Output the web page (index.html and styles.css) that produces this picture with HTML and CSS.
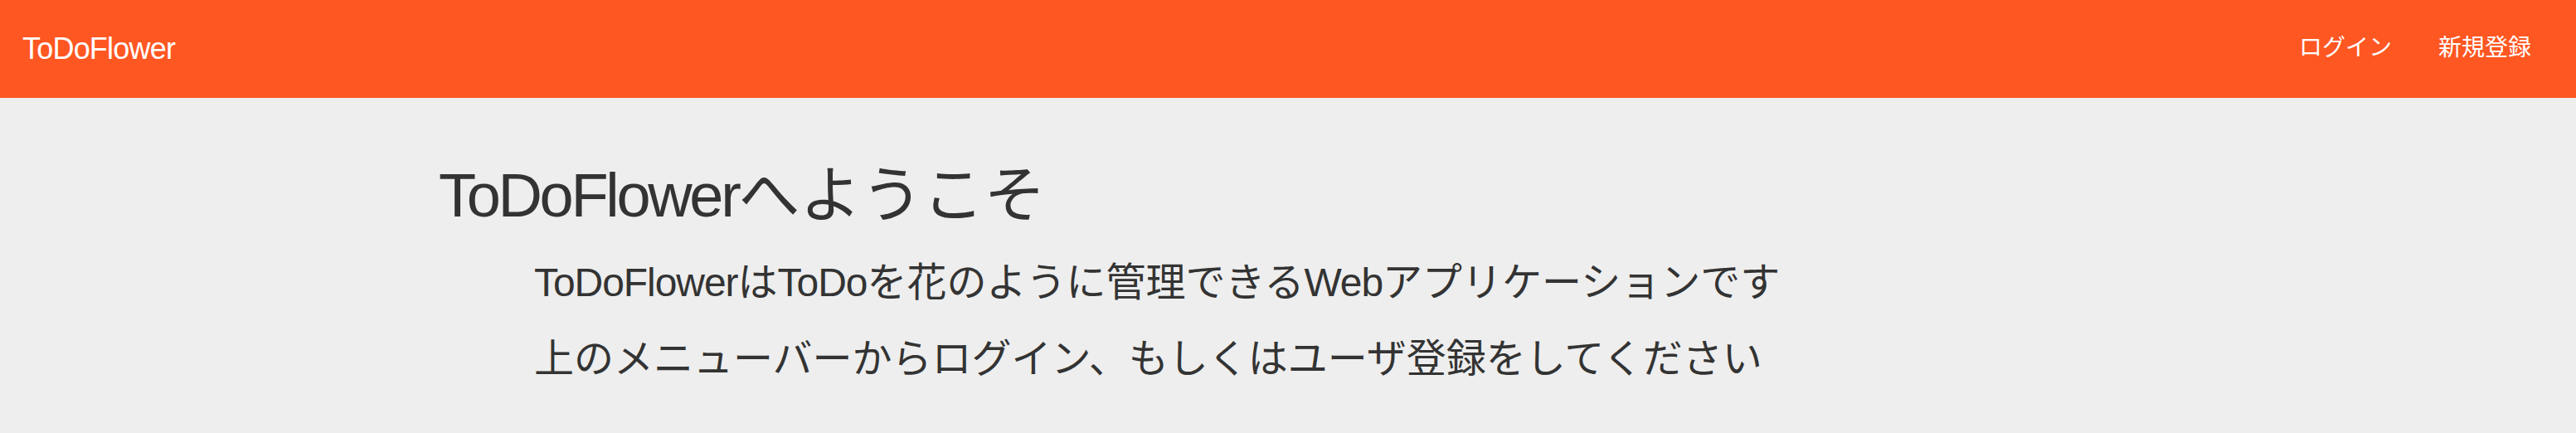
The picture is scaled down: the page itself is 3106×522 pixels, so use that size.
FILE: index.html
```html
<!DOCTYPE html>
<html lang="ja">
<head>
<meta charset="utf-8">
<title>ToDoFlower</title>
<link rel="stylesheet" href="styles.css">
</head>
<body>
<nav class="navbar">
  <a class="brand" href="#"><span class="latin">ToDoFlower</span></a>
  <ul class="nav-links">
    <li><a href="#">ログイン</a></li>
    <li><a href="#">新規登録</a></li>
  </ul>
</nav>
<main class="content">
  <h1 class="title"><span class="latin">ToDoFlower</span>へようこそ</h1>
  <div class="intro">
    <p><span class="latin">ToDoFlower</span>は<span class="latin">ToDo</span>を花のように管理できる<span class="latin">Web</span>アプリケーションです</p>
    <p>上のメニューバーからログイン、もしくはユーザ登録をしてください</p>
  </div>
</main>
</body>
</html>
```
FILE: styles.css
```css
html, body {
  margin: 0;
  padding: 0;
}
body {
  background: #eeeeee;
  font-family: "Liberation Sans", "Noto Sans CJK JP", sans-serif;
  color: #333333;
}
.latin {
  letter-spacing: -0.022em;
}
.navbar {
  height: 118px;
  background: #ff5722;
  display: flex;
  align-items: center;
  justify-content: space-between;
  padding: 0 26px 0 27px;
}
.brand {
  color: #ffffff;
  text-decoration: none;
  font-size: 36px;
  line-height: 36px;
}
.nav-links {
  list-style: none;
  margin: 0;
  padding: 0;
  display: flex;
}
.nav-links a {
  display: block;
  color: #ffffff;
  text-decoration: none;
  font-size: 28px;
  line-height: 28px;
  padding: 0 28px 3px;
}
.content {
  padding-left: 529px;
}
.title {
  margin: 68px 0 0;
  font-weight: normal;
  font-size: 74px;
  line-height: 100px;
}
.title .latin {
  letter-spacing: -0.045em;
}
.intro {
  padding: 9px 0 0 115px;
}
.intro p {
  margin: 0;
  font-size: 48px;
  line-height: 92px;
}
```
